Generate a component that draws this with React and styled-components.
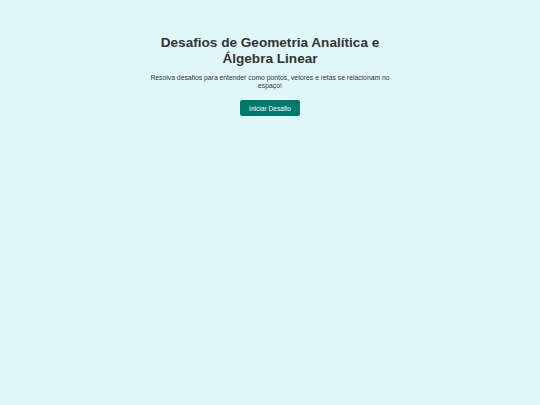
import React from 'react'
import styled, { createGlobalStyle } from 'styled-components'

const GlobalStyle = createGlobalStyle`
  html, body {
    margin: 0;
    padding: 0;
    background: #e0f7fa;
    font-family: 'Liberation Sans', Arial, sans-serif;
  }
`

const Page = styled.div`
  min-height: 405px;
  background: #e0f7fa;
  display: flex;
  justify-content: center;
`

const Hero = styled.div`
  width: 250px;
  padding-top: 35px;
  text-align: center;
`

const Title = styled.h1`
  margin: 0;
  font-size: 13.6px;
  line-height: 16px;
  font-weight: 700;
  color: #333;
`

const Subtitle = styled.p`
  margin: 7px 0 0;
  font-size: 6.8px;
  line-height: 8px;
  color: #333;
`

const StartButton = styled.button`
  margin-top: 10px;
  padding: 0;
  width: 60px;
  height: 16px;
  border: none;
  border-radius: 2px;
  background: #00796b;
  color: #fff;
  font-family: inherit;
  font-size: 6.6px;
  cursor: pointer;
`

const App = () => {
  return (
    <Page>
      <GlobalStyle />
      <Hero>
        <Title>Desafios de Geometria Analítica e Álgebra Linear</Title>
        <Subtitle>Resolva desafios para entender como pontos, vetores e retas se relacionam no espaço!</Subtitle>
        <StartButton>Iniciar Desafio</StartButton>
      </Hero>
    </Page>
  )
}

export default App
